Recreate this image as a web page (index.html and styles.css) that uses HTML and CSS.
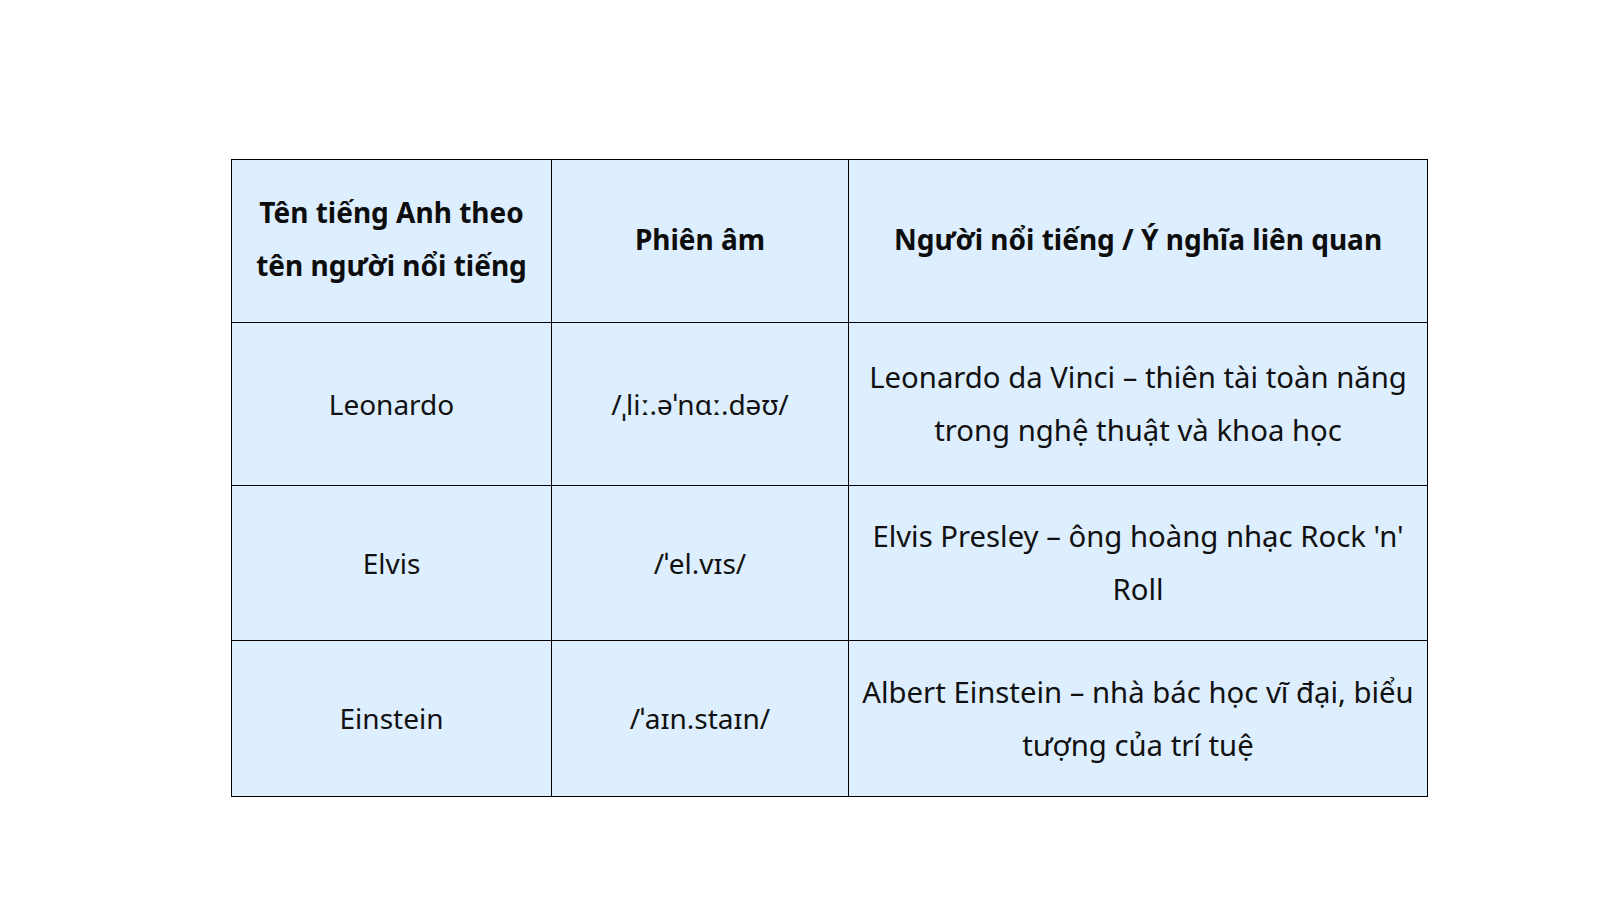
FILE: index.html
```html
<!DOCTYPE html>
<html lang="vi">
<head>
<meta charset="utf-8">
<title>Tên tiếng Anh theo tên người nổi tiếng</title>
<link rel="stylesheet" href="styles.css">
</head>
<body>
<main class="page">
  <table class="names">
    <colgroup>
      <col class="c1">
      <col class="c2">
      <col class="c3">
    </colgroup>
    <thead>
      <tr class="row-head">
        <th>Tên tiếng Anh theo<br>tên người nổi tiếng</th>
        <th>Phiên âm</th>
        <th>Người nổi tiếng / Ý nghĩa liên quan</th>
      </tr>
    </thead>
    <tbody>
      <tr class="row-a">
        <td class="name">Leonardo</td>
        <td class="ipa">/ˌliː.əˈnɑː.dəʊ/</td>
        <td class="desc">Leonardo da Vinci – thiên tài toàn năng<br>trong nghệ thuật và khoa học</td>
      </tr>
      <tr class="row-b">
        <td class="name">Elvis</td>
        <td class="ipa">/ˈel.vɪs/</td>
        <td class="desc">Elvis Presley – ông hoàng nhạc Rock 'n'<br>Roll</td>
      </tr>
      <tr class="row-c">
        <td class="name">Einstein</td>
        <td class="ipa">/ˈaɪn.staɪn/</td>
        <td class="desc">Albert Einstein – nhà bác học vĩ đại, biểu<br>tượng của trí tuệ</td>
      </tr>
    </tbody>
  </table>
</main>
</body>
</html>
```

FILE: styles.css
```css
html, body {
  margin: 0;
  padding: 0;
  background: #ffffff;
}

.page {
  padding: 159px 0 0 231px;
  font-family: "Noto Sans", "Open Sans", sans-serif;
  color: #111111;
}

.names {
  border-collapse: collapse;
  table-layout: fixed;
  width: 1196px;
  background: #ddeefe;
}

.c1 { width: 320px; }
.c2 { width: 297px; }
.c3 { width: 579px; }

.names th,
.names td {
  border: 1px solid #000000;
  text-align: center;
  vertical-align: middle;
  padding: 0 6px;
  line-height: 53px;
}

.names th {
  font-weight: 700;
  font-size: 28px;
  color: #0d0d0d;
  padding-bottom: 4px;
}

.names td {
  font-weight: 400;
  font-size: 28px;
}

.names td.desc {
  font-size: 29.3px;
}

.row-head { height: 163px; }
.row-a { height: 163px; }
.row-b { height: 155px; }
.row-c { height: 156px; }
```
